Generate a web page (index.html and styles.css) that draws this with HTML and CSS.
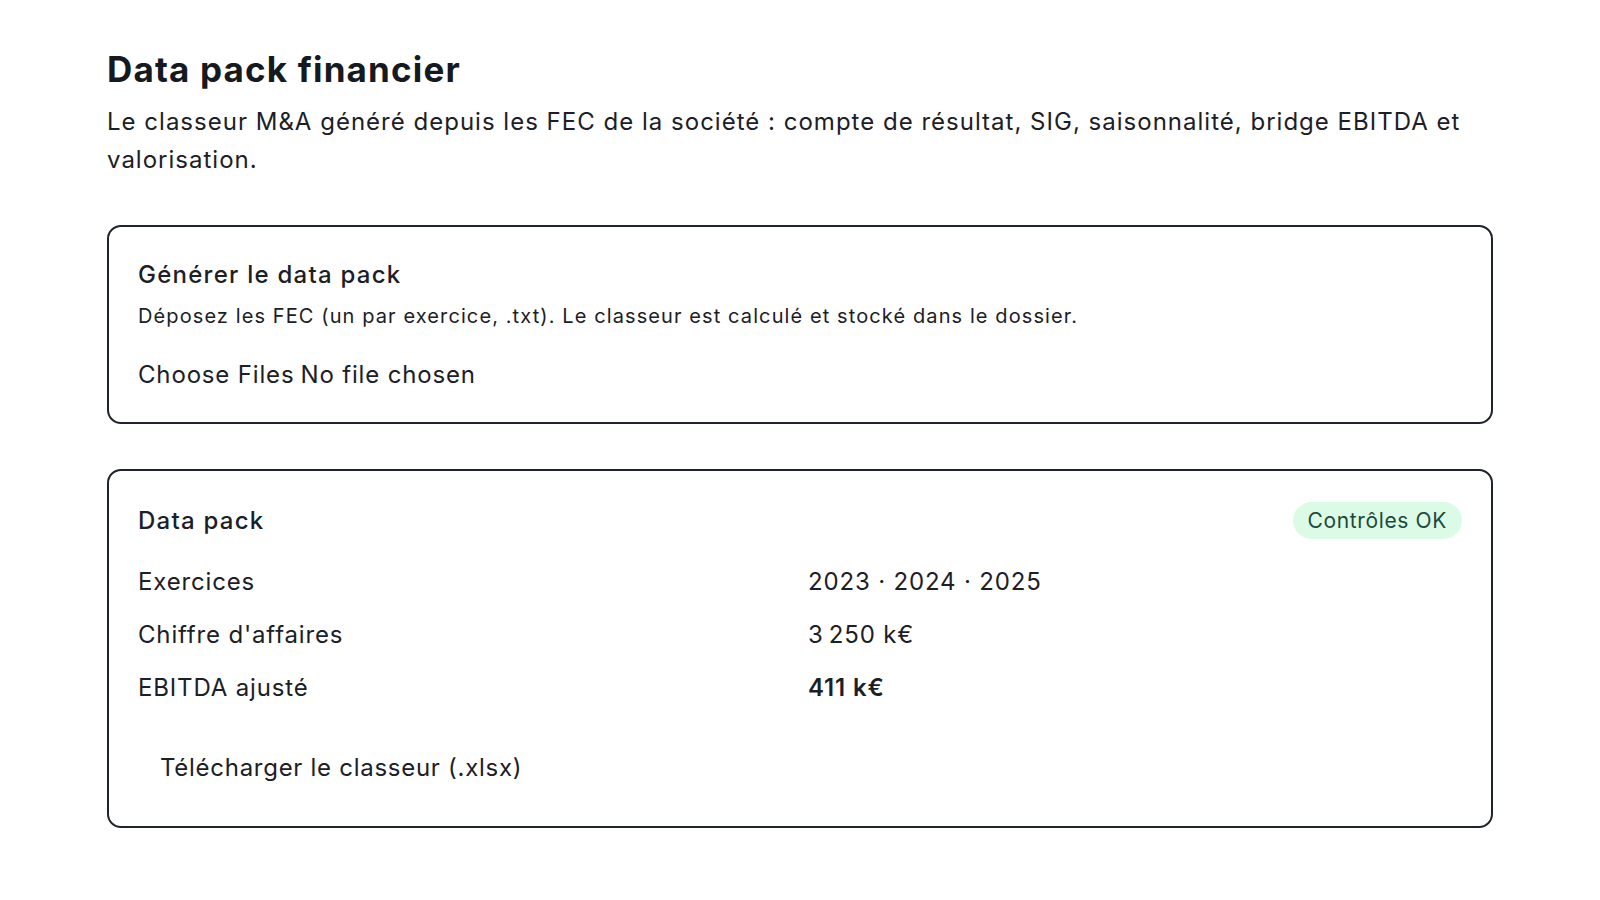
FILE: index.html
```html
<!DOCTYPE html>
<html lang="fr">
<head>
<meta charset="utf-8">
<title>Data pack financier</title>
<link rel="stylesheet" href="styles.css">
</head>
<body>
<main class="page">
  <header class="page-head">
    <h1 class="page-title">Data pack financier</h1>
    <p class="page-lead">Le classeur M&amp;A généré depuis les FEC de la société : compte de résultat, SIG, saisonnalité, bridge EBITDA et valorisation.</p>
  </header>

  <section class="card card-upload">
    <h2 class="card-title">Générer le data pack</h2>
    <p class="card-desc">Déposez les FEC (un par exercice, .txt). Le classeur est calculé et stocké dans le dossier.</p>
    <label class="file-field">
      <span class="file-btn">Choose Files</span>
      <span class="file-name">No file chosen</span>
    </label>
  </section>

  <section class="card card-pack">
    <div class="card-head">
      <h2 class="card-title">Data pack</h2>
      <span class="badge">Contrôles OK</span>
    </div>
    <dl class="facts">
      <dt>Exercices</dt>
      <dd>2023 · 2024 · 2025</dd>
      <dt>Chiffre d'affaires</dt>
      <dd>3&#8239;250 k€</dd>
      <dt>EBITDA ajusté</dt>
      <dd class="strong">411 k€</dd>
    </dl>
    <div class="actions">
      <button class="download" type="button">Télécharger le classeur (.xlsx)</button>
    </div>
  </section>
</main>
</body>
</html>
```

FILE: styles.css
```css
* { box-sizing: border-box; }

html, body {
  margin: 0;
  padding: 0;
  background: #ffffff;
}

body {
  font-family: Inter, "Noto Sans", "Liberation Sans", sans-serif;
  color: #1c2026;
  font-size: 24px;
  line-height: 36px;
  letter-spacing: 0.035em;
}

.page {
  width: 1386px;
  margin: 0 auto;
  padding-top: 48px;
}

.page-title {
  margin: 0;
  font-size: 35px;
  line-height: 43px;
  font-weight: 700;
  color: #151a20;
  letter-spacing: 0.033em;
}

.page-lead {
  margin: 12px 0 0;
  font-size: 24px;
  line-height: 38px;
  letter-spacing: 0.042em;
}

.card {
  border: 2px solid #1f242a;
  border-radius: 14px;
  padding: 30px 29px 29px;
}

.card-upload {
  margin-top: 46px;
}

.card-pack {
  margin-top: 45px;
  padding-top: 31px;
  padding-bottom: 30px;
}

.card-title {
  margin: 0;
  font-size: 24px;
  line-height: 36px;
  font-weight: 500;
  letter-spacing: 0.052em;
}

.card-desc {
  margin: 8px 0 0;
  font-size: 20px;
  line-height: 30px;
  letter-spacing: 0.055em;
}

.file-field {
  display: flex;
  gap: 6px;
  margin-top: 26px;
}

.card-head {
  display: flex;
  align-items: center;
  justify-content: space-between;
  min-height: 37px;
}

.badge {
  display: inline-flex;
  align-items: center;
  height: 37px;
  padding: 0 15px;
  border-radius: 999px;
  background: #dcfbe7;
  color: #1d4a3b;
  font-size: 21px;
  line-height: 37px;
  letter-spacing: 0.03em;
}

.facts {
  display: grid;
  grid-template-columns: 1fr 1fr;
  column-gap: 16px;
  row-gap: 17px;
  margin: 25px 0 0;
}

.facts dt,
.facts dd {
  margin: 0;
}

.facts .strong {
  font-weight: 600;
}

.actions {
  margin-top: 34px;
}

.download {
  font: inherit;
  color: inherit;
  letter-spacing: 0.03em;
  background: transparent;
  border: 0;
  padding: 10px 22px;
  cursor: pointer;
}
```
